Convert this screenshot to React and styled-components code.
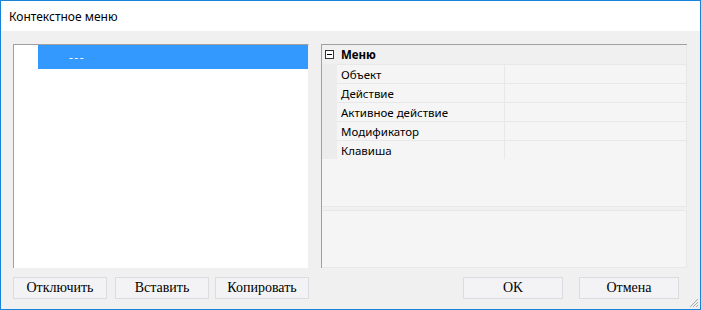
import React from 'react';
import styled, { createGlobalStyle } from 'styled-components';

const GlobalStyle = createGlobalStyle`
  html, body {
    margin: 0;
    padding: 0;
    background: #ffffff;
  }
  * {
    box-sizing: border-box;
  }
`;

const properties = ['Объект', 'Действие', 'Активное действие', 'Модификатор', 'Клавиша'];

const MinusBox = () => (
  <svg width="9" height="9" viewBox="0 0 9 9">
    <rect x="0.5" y="0.5" width="8" height="8" fill="#ffffff" stroke="#333" />
    <line x1="2" y1="4.5" x2="7" y2="4.5" stroke="#000" />
  </svg>
);

const Grip = () => (
  <svg width="12" height="12" viewBox="0 0 12 12">
    <path d="M11 3 L3 11 M11 6 L6 11 M11 9 L9 11" stroke="#a8a8a8" strokeWidth="1" />
  </svg>
);

const App = () => {
  return (
    <>
      <GlobalStyle />
      <Window>
        <TitleBar>Контекстное меню</TitleBar>
        <Body>
          <Panels>
            <Tree>
              <TreeRow selected>---</TreeRow>
            </Tree>
            <Grid>
              <GridRows>
                <Category>
                  <Toggle>
                    <MinusBox />
                  </Toggle>
                  <CategoryName>Меню</CategoryName>
                </Category>
                {properties.map((name) => (
                  <PropRow key={name}>
                    <Gutter />
                    <PropName>{name}</PropName>
                    <PropValue />
                  </PropRow>
                ))}
              </GridRows>
              <Splitter />
              <Description />
            </Grid>
          </Panels>
          <Buttons>
            <ButtonGroup>
              <Button>Отключить</Button>
              <Button style={{ marginLeft: 8 }}>Вставить</Button>
              <Button style={{ marginLeft: 6 }}>Копировать</Button>
            </ButtonGroup>
            <ButtonGroup gap={16}>
              <Button wide>OK</Button>
              <Button wide>Отмена</Button>
            </ButtonGroup>
          </Buttons>
        </Body>
        <GripCorner>
          <Grip />
        </GripCorner>
      </Window>
    </>
  );
};

const Window = styled.div`
  width: 701px;
  height: 310px;
  border: 1px solid #1883d7;
  display: flex;
  flex-direction: column;
  background: #f0f0f0;
  position: relative;
`;

const TitleBar = styled.div`
  height: 30px;
  background: #ffffff;
  padding-left: 8px;
  display: flex;
  align-items: center;
  font-family: "Noto Sans", sans-serif;
  font-size: 12px;
  color: #000;
`;

const Body = styled.div`
  flex: 1;
  padding: 13px 12px 9px 12px;
  display: flex;
  flex-direction: column;
`;

const Panels = styled.div`
  height: 224px;
  display: flex;
  gap: 12px;
`;

const Tree = styled.div`
  width: 296px;
  background: #ffffff;
  border-top: 1px solid #a0a0a0;
  border-left: 1px solid #a0a0a0;
  border-right: 1px solid #f0f0f0;
`;

const TreeRow = styled.div`
  margin-left: 24px;
  height: 24px;
  padding-left: 31px;
  display: flex;
  align-items: center;
  background: ${(p) => (p.selected ? '#3399ff' : 'transparent')};
  color: ${(p) => (p.selected ? '#ffffff' : '#000')};
  font-family: "Noto Sans", sans-serif;
  font-size: 12px;
  letter-spacing: 1.5px;
`;

const Grid = styled.div`
  width: 366px;
  display: flex;
  flex-direction: column;
  border-top: 1px solid #a0a0a0;
  border-left: 1px solid #a0a0a0;
  background: #f0f0f0;
  font-family: "Noto Sans", sans-serif;
  font-size: 11.5px;
`;

const GridRows = styled.div`
  height: 162px;
  background: #f5f5f5;
  border-right: 1px solid #e8e8e8;
  border-bottom: 1px solid #e8e8e8;
`;

const Category = styled.div`
  height: 19px;
  display: flex;
  align-items: center;
  background: #f0f0f0;
`;

const Toggle = styled.div`
  width: 15px;
  padding-left: 3px;
  display: flex;
  align-items: center;
`;

const CategoryName = styled.span`
  font-weight: bold;
  padding-left: 4px;
  color: #000;
`;

const PropRow = styled.div`
  height: 19px;
  display: flex;
`;

const Gutter = styled.div`
  width: 15px;
  background: #ececec;
`;

const PropName = styled.div`
  width: 168px;
  padding-left: 4px;
  display: flex;
  align-items: center;
  color: #000;
  border-top: 1px solid #e8e8e8;
  border-right: 1px solid #e8e8e8;
  background: #f5f5f5;
`;

const PropValue = styled.div`
  flex: 1;
  border-top: 1px solid #e8e8e8;
  background: #f5f5f5;
`;

const Splitter = styled.div`
  height: 3px;
`;

const Description = styled.div`
  flex: 1;
  background: #f5f5f5;
  border: 1px solid #e8e8e8;
  border-left: none;
`;

const Buttons = styled.div`
  margin-top: 9px;
  display: flex;
  justify-content: space-between;
  padding-right: 9px;
`;

const ButtonGroup = styled.div`
  display: flex;
  gap: ${(p) => p.gap || 0}px;
`;

const Button = styled.button`
  width: ${(p) => (p.wide ? 100 : 94)}px;
  height: 22px;
  margin: 0;
  padding: 0;
  background: #f3f3f5;
  border: 1px solid #dcdce0;
  font-family: "Liberation Serif", serif;
  font-size: 14px;
  color: #000;
`;

const GripCorner = styled.div`
  position: absolute;
  right: 1px;
  bottom: 1px;
  width: 12px;
  height: 12px;
  display: flex;
`;

export default App;
